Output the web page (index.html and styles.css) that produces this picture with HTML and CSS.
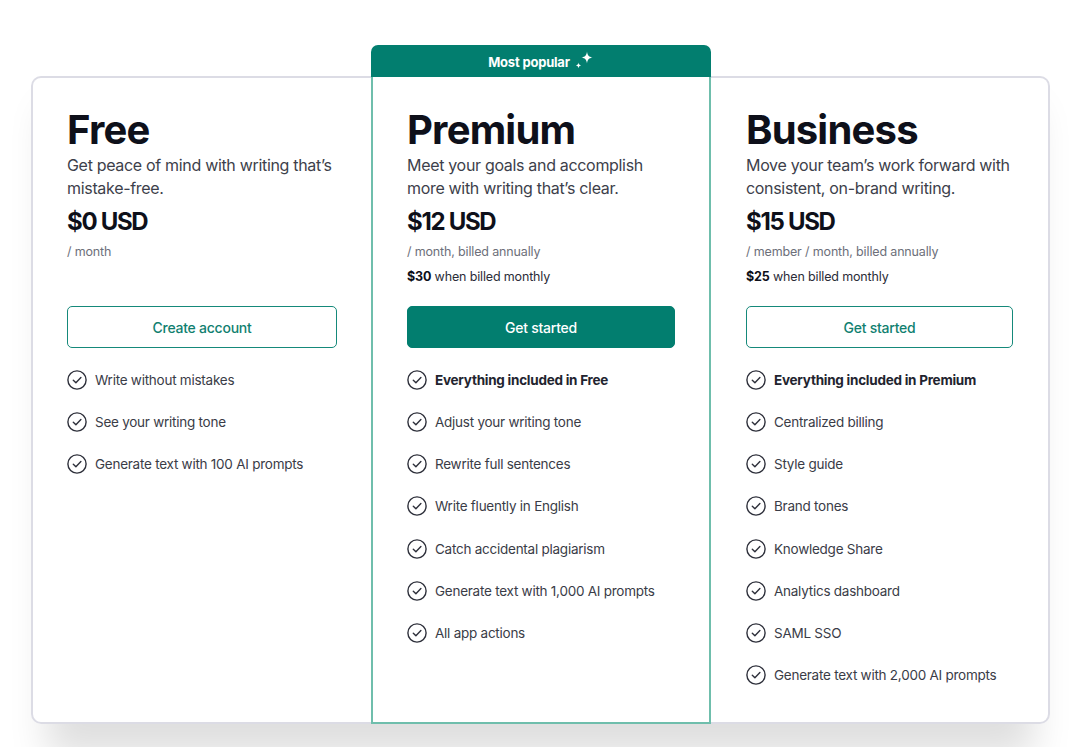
FILE: index.html
```html
<!DOCTYPE html>
<html lang="en">
<head>
<meta charset="utf-8">
<title>Plans</title>
<link rel="stylesheet" href="styles.css">
</head>
<body>
<div class="page">
  <div class="plans">
    <section class="plan plan-free">
      <div class="plan-body">
        <h2 class="plan-name">Free</h2>
        <p class="plan-desc">Get peace of mind with writing that’s mistake-free.</p>
        <div class="price">$0 USD</div>
        <div class="billing">
          <div class="period">/ month</div>
        </div>
        <a class="btn btn-outline">Create account</a>
        <ul class="features">
          <li><svg class="check" viewBox="0 0 20 20"><circle cx="10" cy="10" r="9.1"/><path d="M6.3 10.2l2.6 2.6 5-5.2"/></svg><span>Write without mistakes</span></li>
          <li><svg class="check" viewBox="0 0 20 20"><circle cx="10" cy="10" r="9.1"/><path d="M6.3 10.2l2.6 2.6 5-5.2"/></svg><span>See your writing tone</span></li>
          <li><svg class="check" viewBox="0 0 20 20"><circle cx="10" cy="10" r="9.1"/><path d="M6.3 10.2l2.6 2.6 5-5.2"/></svg><span>Generate text with 100 AI prompts</span></li>
        </ul>
      </div>
    </section>
    <section class="plan plan-premium">
      <div class="badge">Most popular
        <svg class="sparkle" viewBox="0 0 20 20"><path d="M13 1.5c.5 4 1.9 5.4 5.5 6-3.6.6-5 2-5.5 6-.5-4-1.9-5.4-5.5-6 3.6-.6 5-2 5.5-6z"/><path d="M4.5 12.5c.3 2 .9 2.6 2.7 2.9-1.8.3-2.4.9-2.7 2.9-.3-2-.9-2.6-2.7-2.9 1.8-.3 2.4-.9 2.7-2.9z"/></svg>
      </div>
      <div class="plan-body">
        <h2 class="plan-name">Premium</h2>
        <p class="plan-desc">Meet your goals and accomplish more with writing that’s clear.</p>
        <div class="price">$12 USD</div>
        <div class="billing">
          <div class="period">/ month, billed annually</div>
          <div class="monthly"><b>$30</b> when billed monthly</div>
        </div>
        <a class="btn btn-fill">Get started</a>
        <ul class="features">
          <li class="strong"><svg class="check" viewBox="0 0 20 20"><circle cx="10" cy="10" r="9.1"/><path d="M6.3 10.2l2.6 2.6 5-5.2"/></svg><span>Everything included in Free</span></li>
          <li><svg class="check" viewBox="0 0 20 20"><circle cx="10" cy="10" r="9.1"/><path d="M6.3 10.2l2.6 2.6 5-5.2"/></svg><span>Adjust your writing tone</span></li>
          <li><svg class="check" viewBox="0 0 20 20"><circle cx="10" cy="10" r="9.1"/><path d="M6.3 10.2l2.6 2.6 5-5.2"/></svg><span>Rewrite full sentences</span></li>
          <li><svg class="check" viewBox="0 0 20 20"><circle cx="10" cy="10" r="9.1"/><path d="M6.3 10.2l2.6 2.6 5-5.2"/></svg><span>Write fluently in English</span></li>
          <li><svg class="check" viewBox="0 0 20 20"><circle cx="10" cy="10" r="9.1"/><path d="M6.3 10.2l2.6 2.6 5-5.2"/></svg><span>Catch accidental plagiarism</span></li>
          <li><svg class="check" viewBox="0 0 20 20"><circle cx="10" cy="10" r="9.1"/><path d="M6.3 10.2l2.6 2.6 5-5.2"/></svg><span>Generate text with 1,000 AI prompts</span></li>
          <li><svg class="check" viewBox="0 0 20 20"><circle cx="10" cy="10" r="9.1"/><path d="M6.3 10.2l2.6 2.6 5-5.2"/></svg><span>All app actions</span></li>
        </ul>
      </div>
    </section>
    <section class="plan plan-business">
      <div class="plan-body">
        <h2 class="plan-name">Business</h2>
        <p class="plan-desc">Move your team’s work forward with consistent, on-brand writing.</p>
        <div class="price">$15 USD</div>
        <div class="billing">
          <div class="period">/ member / month, billed annually</div>
          <div class="monthly"><b>$25</b> when billed monthly</div>
        </div>
        <a class="btn btn-outline">Get started</a>
        <ul class="features">
          <li class="strong"><svg class="check" viewBox="0 0 20 20"><circle cx="10" cy="10" r="9.1"/><path d="M6.3 10.2l2.6 2.6 5-5.2"/></svg><span>Everything included in Premium</span></li>
          <li><svg class="check" viewBox="0 0 20 20"><circle cx="10" cy="10" r="9.1"/><path d="M6.3 10.2l2.6 2.6 5-5.2"/></svg><span>Centralized billing</span></li>
          <li><svg class="check" viewBox="0 0 20 20"><circle cx="10" cy="10" r="9.1"/><path d="M6.3 10.2l2.6 2.6 5-5.2"/></svg><span>Style guide</span></li>
          <li><svg class="check" viewBox="0 0 20 20"><circle cx="10" cy="10" r="9.1"/><path d="M6.3 10.2l2.6 2.6 5-5.2"/></svg><span>Brand tones</span></li>
          <li><svg class="check" viewBox="0 0 20 20"><circle cx="10" cy="10" r="9.1"/><path d="M6.3 10.2l2.6 2.6 5-5.2"/></svg><span>Knowledge Share</span></li>
          <li><svg class="check" viewBox="0 0 20 20"><circle cx="10" cy="10" r="9.1"/><path d="M6.3 10.2l2.6 2.6 5-5.2"/></svg><span>Analytics dashboard</span></li>
          <li><svg class="check" viewBox="0 0 20 20"><circle cx="10" cy="10" r="9.1"/><path d="M6.3 10.2l2.6 2.6 5-5.2"/></svg><span>SAML SSO</span></li>
          <li><svg class="check" viewBox="0 0 20 20"><circle cx="10" cy="10" r="9.1"/><path d="M6.3 10.2l2.6 2.6 5-5.2"/></svg><span>Generate text with 2,000 AI prompts</span></li>
        </ul>
      </div>
    </section>
  </div>
</div>
</body>
</html>
```
FILE: styles.css
```css
* { box-sizing: border-box; }
html, body { margin: 0; padding: 0; background: #fff; }
body {
  font-family: Inter, "Noto Sans", "Liberation Sans", sans-serif;
  color: #0e101a;
  overflow: hidden;
}
.page {
  padding: 45px 30px 0 31px;
  height: 747px;
}
.plans {
  display: flex;
  width: 1019px;
  box-shadow: 0 48px 36px -16px rgba(0, 0, 0, 0.13);
  border-radius: 10px;
}
.plan {
  width: 340px;
  display: flex;
  flex-direction: column;
  background: #fff;
}
.plan-free {
  margin-top: 31px;
  border: 2px solid #dcdce5;
  border-right: none;
  border-radius: 10px 0 0 10px;
}
.plan-business {
  width: 339px;
  margin-top: 31px;
  border: 2px solid #dcdce5;
  border-left: none;
  border-radius: 0 10px 10px 0;
}
.plan-premium {
  position: relative;
  z-index: 1;
}
.badge {
  height: 32px;
  background: #027e6f;
  color: #fff;
  border-radius: 7px 7px 0 0;
  display: flex;
  align-items: center;
  justify-content: center;
  font-size: 13px;
  font-weight: 700;
  letter-spacing: -0.2px;
  gap: 4px;
  padding-top: 1px;
}
.sparkle {
  width: 20px;
  height: 20px;
  fill: #fff;
  margin-top: -4px;
}
.plan-body {
  padding: 28px 34px 36px 34px;
  height: 100%;
}
.plan-premium .plan-body {
  flex: 1;
  border: 2px solid #6fbeac;
  border-top: none;
  padding-top: 29px;
}
.plan-business .plan-body { padding-left: 35px; padding-right: 35px; }
.plan-name {
  margin: 0;
  font-size: 40px;
  line-height: 48px;
  font-weight: 700;
  letter-spacing: -0.8px;
  color: #0e101a;
}
.plan-desc {
  margin: 0;
  font-size: 16px;
  line-height: 23px;
  letter-spacing: -0.32px;
  color: #3d3f4b;
}
.price {
  margin-top: 5px;
  font-size: 24px;
  line-height: 34px;
  font-weight: 700;
  letter-spacing: -1.3px;
  color: #0e101a;
}
.billing {
  min-height: 50px;
  font-size: 12.5px;
  line-height: 25px;
  letter-spacing: -0.15px;
}
.period { color: #6d6f7a; }
.monthly { color: #2b2d38; }
.monthly b { font-weight: 700; color: #0e101a; }
.btn {
  margin-top: 17px;
  display: flex;
  align-items: center;
  justify-content: center;
  height: 42px;
  border-radius: 5px;
  font-size: 14px;
  font-weight: 500;
  letter-spacing: -0.25px;
  cursor: pointer;
}
.btn-outline {
  border: 1px solid #15897a;
  color: #117f70;
  background: #fff;
}
.btn-fill {
  background: #027e6f;
  color: #fff;
  border: 1px solid #027e6f;
}
.features {
  list-style: none;
  margin: 21px 0 0;
  padding: 0;
  display: flex;
  flex-direction: column;
  gap: 20.15px;
}
.features li {
  display: flex;
  align-items: center;
  gap: 8px;
  height: 22px;
  font-size: 13.5px;
  letter-spacing: -0.25px;
  color: #3a3c47;
}
.features li.strong { font-weight: 700; color: #22242f; }
.check {
  width: 20px;
  height: 20px;
  flex: none;
  fill: none;
  stroke: #2e303b;
  stroke-width: 1.4;
  stroke-linecap: round;
  stroke-linejoin: round;
}
```
